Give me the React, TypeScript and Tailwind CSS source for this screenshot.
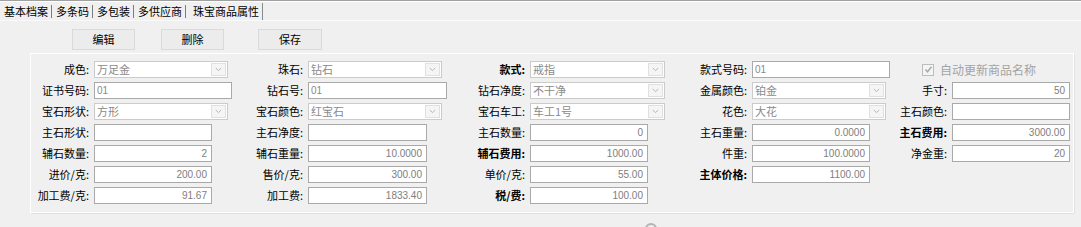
import React from 'react';

type Cell =
    | { kind: 'combo'; label: string; value: string; w: number; bold?: boolean }
    | { kind: 'text'; label: string; value: string; w: number; bold?: boolean }
    | { kind: 'num'; label: string; value: string; w: number; bold?: boolean }
    | { kind: 'check'; label: string };

const colWidths = [214, 222, 222, 202, 179];

const rows: Cell[][] = [
    [
        { kind: 'combo', label: '成色:', value: '万足金', w: 134 },
        { kind: 'combo', label: '珠石:', value: '钻石', w: 134 },
        { kind: 'combo', label: '款式:', value: '戒指', w: 135, bold: true },
        { kind: 'text', label: '款式号码:', value: '01', w: 138 },
        { kind: 'check', label: '自动更新商品名称' },
    ],
    [
        { kind: 'text', label: '证书号码:', value: '01', w: 138 },
        { kind: 'text', label: '钻石号:', value: '01', w: 139 },
        { kind: 'combo', label: '钻石净度:', value: '不干净', w: 135 },
        { kind: 'combo', label: '金属颜色:', value: '铂金', w: 134 },
        { kind: 'num', label: '手寸:', value: '50', w: 118 },
    ],
    [
        { kind: 'combo', label: '宝石形状:', value: '方形', w: 134 },
        { kind: 'combo', label: '宝石颜色:', value: '红宝石', w: 134 },
        { kind: 'combo', label: '宝石车工:', value: '车工1号', w: 135 },
        { kind: 'combo', label: '花色:', value: '大花', w: 134 },
        { kind: 'text', label: '主石颜色:', value: '', w: 118 },
    ],
    [
        { kind: 'text', label: '主石形状:', value: '', w: 118 },
        { kind: 'text', label: '主石净度:', value: '', w: 119 },
        { kind: 'num', label: '主石数量:', value: '0', w: 118 },
        { kind: 'num', label: '主石重量:', value: '0.0000', w: 118 },
        { kind: 'num', label: '主石费用:', value: '3000.00', w: 118, bold: true },
    ],
    [
        { kind: 'num', label: '辅石数量:', value: '2', w: 118 },
        { kind: 'num', label: '辅石重量:', value: '10.0000', w: 119 },
        { kind: 'num', label: '辅石费用:', value: '1000.00', w: 118, bold: true },
        { kind: 'num', label: '件重:', value: '100.0000', w: 118 },
        { kind: 'num', label: '净金重:', value: '20', w: 118 },
    ],
    [
        { kind: 'num', label: '进价/克:', value: '200.00', w: 118 },
        { kind: 'num', label: '售价/克:', value: '300.00', w: 119 },
        { kind: 'num', label: '单价/克:', value: '55.00', w: 118 },
        { kind: 'num', label: '主体价格:', value: '1100.00', w: 118, bold: true },
    ],
    [
        { kind: 'num', label: '加工费/克:', value: '91.67', w: 118 },
        { kind: 'num', label: '加工费:', value: '1833.40', w: 119 },
        { kind: 'num', label: '税/费:', value: '100.00', w: 118, bold: true },
    ],
];

const tabs = ['基本档案', '多条码', '多包装', '多供应商'];

function Field({ cell, col }: { cell: Cell; col: number }) {
    if (cell.kind === 'check') {
        return (
            <div className="flex items-center h-[17px] pl-[31px] gap-[6px] text-[#a3a3a3]">
                <div className="w-[12px] h-[12px] border border-[#bdbdbd] bg-[#f4f4f4] flex items-center justify-center">
                    <svg width="9" height="9" viewBox="0 0 9 9">
                        <path d="M1.5 4.5 L3.5 6.8 L7.5 1.8" stroke="#a8a8a8" strokeWidth="1.4" fill="none" />
                    </svg>
                </div>
                <span className="text-[12px] leading-none">{cell.label}</span>
            </div>
        );
    }

    const labelWidth = col === 4 ? 'w-[59px]' : 'w-[61px]';

    return (
        <div className="flex items-center h-[17px]">
            <div
                className={`${labelWidth} shrink-0 text-right pr-[3px] text-[11px] leading-none text-black ${
                    cell.bold ? 'font-bold' : 'font-normal'
                }`}
            >
                {cell.label}
            </div>
            <div className="w-[2px] shrink-0" />
            {cell.kind === 'combo' && (
                <div
                    className="h-[17px] bg-white border border-[#cbcbcb] flex items-center justify-between"
                    style={{ width: cell.w }}
                >
                    <span className="pl-[2px] text-[11px] leading-none text-[#8a8a8a]">{cell.value}</span>
                    <div className="w-[15px] h-[13px] mr-[1px] border border-[#e0e0e0] bg-[#f5f5f5] flex items-center justify-center">
                        <svg width="7" height="5" viewBox="0 0 7 5">
                            <path d="M0.8 1 L3.5 3.6 L6.2 1" stroke="#b5b5b5" strokeWidth="1" fill="none" />
                        </svg>
                    </div>
                </div>
            )}
            {cell.kind === 'text' && (
                <div
                    className="h-[17px] bg-white border border-[#a9a9a9] flex items-center"
                    style={{ width: cell.w }}
                >
                    <span className="pl-[2px] text-[10px] leading-none text-[#8a8a8a] font-['Liberation_Sans',sans-serif]">
                        {cell.value}
                    </span>
                </div>
            )}
            {cell.kind === 'num' && (
                <div
                    className="h-[17px] bg-white border border-[#a9a9a9] flex items-center justify-end"
                    style={{ width: cell.w }}
                >
                    <span className="pr-[4px] text-[10px] leading-none text-[#7e7e7e] font-['Liberation_Sans',sans-serif]">
                        {cell.value}
                    </span>
                </div>
            )}
        </div>
    );
}

export default function App() {
    return (
        <div className="w-[1081px] h-[227px] overflow-hidden bg-[#f0f0f0] font-['Noto_Sans_CJK_SC',sans-serif] text-black">
            {/* tab strip */}
            <div className="border-t border-[#a0a0a0]">
                <div className="h-[20px] border-t border-white border-b border-b-[#fafafa] flex items-center text-[11px] leading-none">
                    <div className="flex items-center pl-[4px]">
                        {tabs.map((t) => (
                            <div key={t} className="flex items-center">
                                <span>{t}</span>
                                <span className="ml-[3px] mr-[4px] w-px h-[13px] bg-[#7c7c7c]" />
                            </div>
                        ))}
                        <span className="ml-[3px]">珠宝商品属性</span>
                        <span className="ml-[3px] w-px h-[17px] bg-[#8a8a8a]" />
                    </div>
                </div>
            </div>

            {/* toolbar */}
            <div className="flex items-center h-[21px] mt-[8px] text-[11px] leading-none">
                <button className="ml-[72px] w-[63px] h-[21px] bg-[#ececec] border border-[#dadada]">编辑</button>
                <button className="ml-[26px] w-[63px] h-[21px] bg-[#ececec] border border-[#dadada]">删除</button>
                <button className="ml-[34px] w-[64px] h-[21px] bg-[#ececec] border border-[#dadada]">保存</button>
            </div>

            {/* form panel */}
            <div className="ml-[30px] mt-[3px] w-[1044px] h-[160px] border border-white shadow-[1px_1px_0_#e2e2e2] flex flex-col gap-[4px] pt-[7px]">
                {rows.map((row, ri) => (
                    <div key={ri} className="flex">
                        {row.map((cell, ci) => (
                            <div key={ci} className="shrink-0" style={{ width: colWidths[ci] }}>
                                <Field cell={cell} col={ci} />
                            </div>
                        ))}
                    </div>
                ))}
            </div>

            {/* status spinner (cut off) */}
            <div className="ml-[645px] mt-[10px] w-[12px] h-[12px] rounded-full border-2 border-[#b4b4b4]" />
        </div>
    );
}
